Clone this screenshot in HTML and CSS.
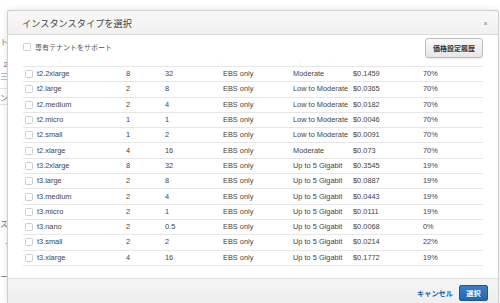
FILE: index.html
```html
<!DOCTYPE html>
<html lang="ja">
<head>
  <meta charset="UTF-8" />
  <meta name="viewport" content="width=device-width, initial-scale=1.0"/>
  <title>インスタンスタイプを選択</title>
  <link rel="stylesheet" href="styles.css">
</head>
<body>

  <!-- ページ本体（モーダルの後ろ） -->
  <div class="page">
    <div class="bg-line l1">ト</div>
    <div class="bg-line l2">2</div>
    <div class="bg-line l3 azul">三</div>
    <div class="bg-band b1"></div>
    <div class="bg-line l4">ン</div>
    <div class="bg-band b2"></div>
    <div class="bg-line l5">ス</div>
    <div class="bg-line l6">-</div>
    <div class="bg-line l7">ー</div>
  </div>

  <div class="modal">
    <div class="modal-header">
      <span class="modal-title">インスタンスタイプを選択</span>
      <span class="fechar">x</span>
    </div>

    <div class="modal-body">
      <div class="toolbar">
        <label class="opcao"><span class="cb"></span>専有テナントをサポート</label>
        <button class="btn-historico">価格設定履歴</button>
      </div>

      <table class="tabela">
        <colgroup>
          <col style="width:14px">
          <col style="width:89px">
          <col style="width:39px">
          <col style="width:58px">
          <col style="width:70px">
          <col style="width:60px">
          <col style="width:70px">
          <col>
        </colgroup>
        <thead>
          <tr>
            <th></th><th><span class="marca">·</span></th><th></th><th></th>
            <th class="dir">·</th><th><span class="marca m2">·</span></th><th><span class="marca m3">·</span></th><th></th>
          </tr>
        </thead>
        <tbody id="linhas"></tbody>
      </table>
    </div>

    <div class="modal-footer">
      <a class="cancelar">キャンセル</a>
      <button class="btn-selecionar">選択</button>
    </div>
  </div>

  <script>
    const instancias = [
      ["t2.2xlarge", "8", "32", "EBS only", "Moderate", "$0.1459", "70%"],
      ["t2.large", "2", "8", "EBS only", "Low to Moderate", "$0.0365", "70%"],
      ["t2.medium", "2", "4", "EBS only", "Low to Moderate", "$0.0182", "70%"],
      ["t2.micro", "1", "1", "EBS only", "Low to Moderate", "$0.0046", "70%"],
      ["t2.small", "1", "2", "EBS only", "Low to Moderate", "$0.0091", "70%"],
      ["t2.xlarge", "4", "16", "EBS only", "Moderate", "$0.073", "70%"],
      ["t3.2xlarge", "8", "32", "EBS only", "Up to 5 Gigabit", "$0.3545", "19%"],
      ["t3.large", "2", "8", "EBS only", "Up to 5 Gigabit", "$0.0887", "19%"],
      ["t3.medium", "2", "4", "EBS only", "Up to 5 Gigabit", "$0.0443", "19%"],
      ["t3.micro", "2", "1", "EBS only", "Up to 5 Gigabit", "$0.0111", "19%"],
      ["t3.nano", "2", "0.5", "EBS only", "Up to 5 Gigabit", "$0.0068", "0%"],
      ["t3.small", "2", "2", "EBS only", "Up to 5 Gigabit", "$0.0214", "22%"],
      ["t3.xlarge", "4", "16", "EBS only", "Up to 5 Gigabit", "$0.1772", "19%"]
    ];

    const corpo = document.getElementById('linhas');
    instancias.forEach(function (linha) {
      const tr = document.createElement('tr');
      let html = '<td><span class="cb"></span></td>';
      linha.forEach(function (valor) {
        html += '<td>' + valor + '</td>';
      });
      tr.innerHTML = html;
      corpo.appendChild(tr);
    });
  </script>

</body>
</html>
```

FILE: styles.css
```css
body {
  font-family: "Liberation Sans", "Noto Sans CJK JP", sans-serif;
  background-color: #ffffff;
  margin: 0;
  width: 500px;
  height: 303px;
  overflow: hidden;
  position: relative;
  color: #444;
}

/* pagina atras da modal */
.page {
  width: 12px;
  height: 303px;
  overflow: hidden;
  position: relative;
  font-size: 8px;
  color: #777;
}

.bg-line {
  position: absolute;
  right: 4px;
  white-space: nowrap;
}

.l1 { top: 36px; }
.l2 { top: 60px; }
.l3 { top: 70px; }
.l4 { top: 92px; }
.l5 { top: 218px; }
.l6 { top: 238px; }
.l7 { top: 271px; }

.azul {
  color: #6b8fc7;
}

.bg-band {
  position: absolute;
  left: 0;
  right: 0;
  height: 1px;
  background-color: #e4e4e4;
}

.b1 { top: 88px; }
.b2 { top: 104px; }

/* modal */
.modal {
  position: absolute;
  left: 7px;
  top: 10px;
  bottom: 0;
  width: 490px;
  background-color: #fff;
  border: 1px solid #cfcfcf;
  border-bottom: none;
  border-radius: 3px 3px 0 0;
  box-shadow: 0 0 6px rgba(0,0,0,0.12);
  display: flex;
  flex-direction: column;
}

.modal-header {
  height: 23px;
  padding: 0 14px;
  display: flex;
  align-items: center;
  justify-content: space-between;
  background: linear-gradient(#f8f8f8, #f1f1f1);
  border-bottom: 1px solid #dcdcdc;
  border-radius: 3px 3px 0 0;
}

.modal-title {
  font-size: 9.2px;
  color: #444;
}

.fechar {
  font-size: 6px;
  color: #555;
  margin-right: -3px;
}

.modal-body {
  padding: 3px 15px 0 15px;
  flex: 0 0 auto;
  height: 240px;
}

.toolbar {
  display: flex;
  justify-content: space-between;
  align-items: flex-start;
}

.opcao {
  display: flex;
  align-items: center;
  font-size: 7px;
  color: #555;
  margin-top: 4px;
}

.opcao .cb {
  margin-right: 4px;
}

.cb {
  display: inline-block;
  width: 6px;
  height: 6px;
  border: 1px solid #cdcdcd;
  border-radius: 1.5px;
  background-color: #fff;
  vertical-align: middle;
}

.btn-historico {
  font-family: inherit;
  height: 20px;
  padding: 0 7px;
  font-size: 7px;
  font-weight: bold;
  color: #333;
  background: linear-gradient(#fafafa, #e6e6e6);
  border: 1px solid #bdbdbd;
  border-radius: 3px;
  box-shadow: 0 1px 1px rgba(0,0,0,0.08);
}

.tabela {
  width: 460px;
  border-collapse: collapse;
  table-layout: fixed;
  font-size: 7.4px;
  color: #444;
}

.tabela th {
  height: 8px;
  padding: 0;
  font-size: 5px;
  font-weight: normal;
  color: #aaa;
  text-align: left;
  line-height: 6px;
  vertical-align: bottom;
  border-bottom: 1px solid #e6e6e6;
}

.marca {
  margin-left: 22px;
}

.m2 {
  margin-left: 6px;
}

.m3 {
  margin-left: -20px;
}

.tabela td {
  height: 14.3px;
  padding: 0;
  white-space: nowrap;
  border-bottom: 1px solid #e6e6e6;
  line-height: 14px;
}

.tabela td:first-child {
  padding-left: 2px;
}

.modal-footer {
  flex: 1;
  background: linear-gradient(#f4f4f4, #efefef);
  border-top: 1px solid #e0e0e0;
  display: flex;
  align-items: flex-start;
  justify-content: flex-end;
  padding: 6px 10px 0 0;
  gap: 6px;
}

.cancelar {
  font-size: 7.2px;
  font-weight: bold;
  color: #2061b0;
  line-height: 15px;
  margin-top: 1px;
}

.btn-selecionar {
  font-family: inherit;
  width: 29px;
  height: 16px;
  font-size: 7.2px;
  font-weight: bold;
  color: #fff;
  background: linear-gradient(#3b7fc8, #2766ad);
  border: 1px solid #1f5799;
  border-radius: 2px;
  padding: 0;
}
```
